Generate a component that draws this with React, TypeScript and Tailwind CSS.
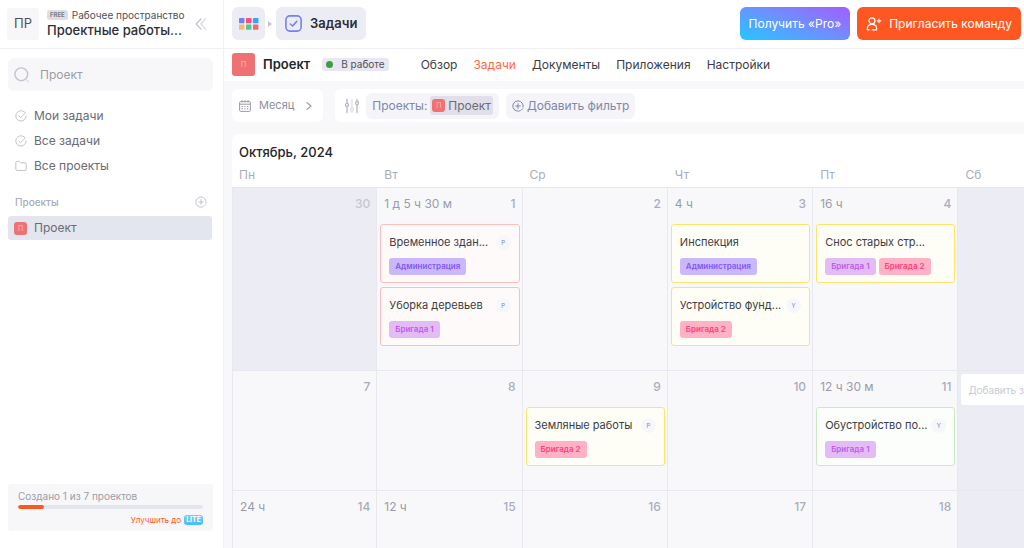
import React, { useState } from 'react';
import clsx from 'clsx';

type Tone = 'red' | 'yellow' | 'green';
type Team = 'Администрация' | 'Бригада 1' | 'Бригада 2';

interface Task {
  title: string;
  tone: Tone;
  teams: Team[];
  assignee?: string;
}

interface Day {
  date: number;
  hours?: string;
  tasks?: Task[];
  otherMonth?: boolean;
  adding?: boolean;
}

const weekDays = ['Пн', 'Вт', 'Ср', 'Чт', 'Пт', 'Сб', 'Вс'];

const weeks: Day[][] = [
  [
    { date: 30, otherMonth: true },
    {
      date: 1,
      hours: '1 д 5 ч 30 м',
      tasks: [
        { title: 'Временное здан...', tone: 'red', teams: ['Администрация'], assignee: 'P' },
        { title: 'Уборка деревьев', tone: 'red', teams: ['Бригада 1'], assignee: 'P' },
      ],
    },
    { date: 2 },
    {
      date: 3,
      hours: '4 ч',
      tasks: [
        { title: 'Инспекция', tone: 'yellow', teams: ['Администрация'] },
        { title: 'Устройство фунд...', tone: 'yellow', teams: ['Бригада 2'], assignee: 'Y' },
      ],
    },
    {
      date: 4,
      hours: '16 ч',
      tasks: [{ title: 'Снос старых стр...', tone: 'yellow', teams: ['Бригада 1', 'Бригада 2'] }],
    },
    { date: 5 },
    { date: 6 },
  ],
  [
    { date: 7 },
    { date: 8 },
    {
      date: 9,
      tasks: [{ title: 'Земляные работы', tone: 'yellow', teams: ['Бригада 2'], assignee: 'P' }],
    },
    { date: 10 },
    {
      date: 11,
      hours: '12 ч 30 м',
      tasks: [{ title: 'Обустройство по...', tone: 'green', teams: ['Бригада 1'], assignee: 'Y' }],
    },
    { date: 12, adding: true },
    { date: 13 },
  ],
  [
    { date: 14, hours: '24 ч' },
    { date: 15, hours: '12 ч' },
    { date: 16 },
    { date: 17 },
    { date: 18 },
    { date: 19 },
    { date: 20 },
  ],
];

const cardTones: Record<Tone, string> = {
  red: 'border-[#ffbdbd] bg-[#fffafa]',
  yellow: 'border-[#ffe46b] bg-[#fffef6]',
  green: 'border-[#cbe8c4] bg-[#fbfefb]',
};

const teamTones: Record<Team, string> = {
  'Администрация': 'bg-[#cab8fa] text-[#8257fb]',
  'Бригада 1': 'bg-[#e3bcf6] text-[#bf5bea]',
  'Бригада 2': 'bg-[#ffb1c6] text-[#ff417b]',
};

const CheckCircleIcon = () => (
  <svg className="size-3 shrink-0" viewBox="0 0 12 12" fill="none" stroke="#c3c4cd" strokeLinecap="round" strokeLinejoin="round">
    <path d="M9.6 2.1A5.2 5.2 0 1 0 11.2 6" />
    <path d="M4 6.2 5.5 7.6 10.4 2.9" />
  </svg>
);

const FolderIcon = () => (
  <svg className="size-3 shrink-0" viewBox="0 0 12 12" fill="none" stroke="#c3c4cd" strokeLinejoin="round">
    <path d="M.8 2.5c0-.7.5-1.2 1.2-1.2h2.3l1.5 1.6H10c.7 0 1.2.5 1.2 1.2v5.2c0 .7-.5 1.2-1.2 1.2H2c-.7 0-1.2-.5-1.2-1.2z" />
  </svg>
);

const PlusCircleIcon = ({ className }: { className: string }) => (
  <svg className={className} viewBox="0 0 12 12" fill="none" stroke="currentColor" strokeLinecap="round">
    <path d="M11.1 7.2A5.2 5.2 0 1 0 8.4 10.7" />
    <path d="M6 3.7v4.6M3.7 6h4.6" />
    <path d="M9.6 9.8 10.4 8.9" />
  </svg>
);

const SearchIcon = () => (
  <svg className="size-4 shrink-0" viewBox="0 0 16 16" fill="none" strokeLinecap="round">
    <circle cx="7.3" cy="7.3" r="6.4" stroke="#c3c4cd" strokeWidth="1.4" />
    <path d="M12.6 12.9 14.6 14.8" stroke="#dcdce4" strokeWidth="1.4" />
  </svg>
);

const CollapseIcon = () => (
  <svg className="h-3 w-3" viewBox="0 0 12 12" fill="none" strokeWidth="1.2" strokeLinecap="round" strokeLinejoin="round">
    <path d="M6 .8 1.2 6 6 11.2" stroke="#bfc0ca" />
    <path d="M10.6.8 5.8 6l4.8 5.2" stroke="#d9d9e2" />
  </svg>
);

const AppsIcon = () => (
  <svg className="h-3 w-5" viewBox="0 0 20 12">
    <rect x="0" y="0" width="5.4" height="5.2" rx=".6" fill="#6d83f7" />
    <rect x="7" y="0" width="5.4" height="5.2" rx=".6" fill="#fa4f7c" />
    <rect x="14" y="0" width="5.4" height="5.2" rx=".6" fill="#35a4ff" />
    <rect x="0" y="6.6" width="5.4" height="5.2" rx=".6" fill="#ffb56b" />
    <rect x="7" y="6.6" width="5.4" height="5.2" rx=".6" fill="#57c492" />
    <rect x="14" y="6.6" width="5.4" height="5.2" rx=".6" fill="#f2696c" />
  </svg>
);

const TasksIcon = () => (
  <svg className="size-[17px]" viewBox="0 0 17 17" fill="none" stroke="#7480f6" strokeWidth="1.6" strokeLinecap="round" strokeLinejoin="round">
    <rect x=".9" y=".9" width="15.2" height="15.2" rx="4" />
    <path d="m5.3 9 2.3 2 4.2-4.7" />
  </svg>
);

const InviteIcon = () => (
  <svg className="size-4" viewBox="0 0 16 16" fill="none" stroke="#fff" strokeWidth="1.2" strokeLinecap="round" strokeLinejoin="round">
    <circle cx="6" cy="4.8" r="3" />
    <path d="M3.2 13.8H1.4v-1.6c0-2.3 1.7-3.9 4.6-3.9s4.6 1.6 4.6 3.9v1.6H6.2" />
    <path d="M13 3v3.6M11.2 4.8h3.6" />
  </svg>
);

const CalendarIcon = () => (
  <svg className="size-3" viewBox="0 0 12 12" fill="none" stroke="#9b9ca8">
    <rect x=".6" y="1.6" width="10.8" height="9.8" rx="1.2" />
    <path d="M.6 4.2h10.8M3 .2v2.2M6 .2v2.2M9 .2v2.2" />
    <path d="M2.6 6.4h6.8M2.6 8.8h6.8" strokeDasharray="1.4 1.3" />
  </svg>
);

const SlidersIcon = () => (
  <svg className="h-4 w-[14px]" viewBox="0 0 14 16" fill="none" strokeWidth="1.2" strokeLinecap="round">
    <path d="M2 1.2v4M2 8.8v6" stroke="#b0b1bb" />
    <circle cx="2" cy="7" r="1.5" stroke="#b0b1bb" />
    <path d="M7 1.2v8.6M7 13.6v1.2" stroke="#dcdce4" />
    <circle cx="7" cy="11.7" r="1.5" stroke="#dcdce4" />
    <path d="M12 1.2v2.2M12 6.8v8" stroke="#b0b1bb" />
    <circle cx="12" cy="5" r="1.5" stroke="#b0b1bb" />
  </svg>
);

const ProjectBadge = ({ large }: { large?: boolean }) => (
  <span
    className={clsx(
      'flex shrink-0 items-center justify-center rounded-[3px] bg-[#f07174] text-[7px] leading-none text-[#f9b9ba]',
      large ? 'size-[23px]' : 'size-[13px]'
    )}
  >
    П
  </span>
);

const Sidebar = () => {
  const [query, setQuery] = useState('');

  return (
    <aside className="flex w-56 shrink-0 flex-col border-r border-[#f0f0f5] bg-white">
      <div className="flex h-[49px] items-center border-b border-[#f0f0f5] pr-4 pb-px pl-[7px]">
        <div className="flex size-8 items-center justify-center rounded-[3px] bg-[#f7f7fa] text-[13px] text-[#50515b]">ПР</div>
        <div className="ml-2 min-w-0 flex-1">
          <div className="flex items-center gap-1">
            <span className="rounded-[3px] bg-[#dedee0] px-[3px] text-[6px] leading-[10px] font-bold text-[#7c7d84]">FREE</span>
            <span className="text-[10px] leading-[14px] whitespace-nowrap text-[#50515b]">Рабочее пространство</span>
          </div>
          <div className="text-[13px] leading-[17px] font-medium whitespace-nowrap text-[#2c2d35]">Проектные работы...</div>
        </div>
        <button aria-label="Свернуть меню">
          <CollapseIcon />
        </button>
      </div>

      <label className="mt-[9px] mr-[10px] ml-2 flex h-[33px] items-center gap-[10px] rounded-md bg-[#f7f7fa] px-[6px]">
        <SearchIcon />
        <input
          aria-label="Поиск проекта"
          placeholder="Проект"
          value={query}
          onChange={(e) => setQuery(e.target.value)}
          className="min-w-0 flex-1 bg-transparent text-xs outline-none placeholder:text-[#9b9ca8]"
        />
      </label>

      <nav className="mt-3 flex flex-col px-[15px] text-xs leading-[25px] text-[#6a6b76]">
        <a href="#my-tasks" className="flex items-center gap-[7px]">
          <CheckCircleIcon />
          Мои задачи
        </a>
        <a href="#all-tasks" className="flex items-center gap-[7px]">
          <CheckCircleIcon />
          Все задачи
        </a>
        <a href="#all-projects" className="flex items-center gap-[7px]">
          <FolderIcon />
          Все проекты
        </a>
      </nav>

      <div className="mt-4 flex items-center justify-between pr-4 pl-[15px] text-[10px] leading-4 font-medium text-[#a9adbd]">
        Проекты
        <button aria-label="Добавить проект" className="text-[#c3c4cd]">
          <PlusCircleIcon className="size-3" />
        </button>
      </div>
      <a href="#project" className="mt-[6px] mr-[11px] ml-2 flex h-6 items-center gap-[7px] rounded-[3px] bg-[#e3e6ee] px-[6px] text-xs text-[#6a6b76]">
        <ProjectBadge />
        Проект
      </a>

      <div className="mt-auto mr-[10px] mb-[17px] ml-2 rounded-[3px] bg-[#f7f7fa] px-[10px] py-[5px]">
        <p className="text-[10px] leading-[14px] text-[#9b9ca8]">Создано 1 из 7 проектов</p>
        <div className="mt-[2px] h-1 overflow-hidden rounded-full bg-[#e3e6ee]">
          <div className="h-full w-1/7 rounded-full bg-[#ff5722]" />
        </div>
        <a href="#upgrade" className="mt-[5px] flex items-center justify-end gap-[3px] text-[8px] leading-3 text-[#ff5722]">
          Улучшить до
          <span className="rounded-[3px] bg-linear-to-b from-[#74cdfb] to-[#45bdf0] px-[2px] text-[7px] leading-[10px] font-bold text-white">LITE</span>
        </a>
      </div>
    </aside>
  );
};

const TopBar = () => (
  <header className="flex h-[49px] shrink-0 items-center border-b border-[#f0f0f5] bg-white pr-[3px] pb-px pl-2">
    <button aria-label="Приложения" className="flex h-[33px] w-[33px] items-center justify-center rounded-md bg-[#ececf5]">
      <AppsIcon />
    </button>
    <svg className="mr-1 ml-[3px] h-[6px] w-1 shrink-0" viewBox="0 0 4 6">
      <path d="M0 0 4 3 0 6z" fill="#c3c4cd" />
    </svg>
    <button className="flex h-[33px] items-center gap-2 rounded-md bg-[#ececf5] px-[9px] text-[13px] font-semibold text-[#2c2d35]">
      <TasksIcon />
      Задачи
    </button>
    <button className="ml-auto h-[33px] rounded-md bg-[linear-gradient(20deg,#22c8ff,#6b92ff_50%,#a45cff)] px-[9px] text-xs whitespace-nowrap text-white">
      Получить «Pro»
    </button>
    <button className="ml-[7px] flex h-[33px] items-center gap-[7px] rounded-md bg-[#ff5722] px-[9px] text-xs whitespace-nowrap text-white">
      <InviteIcon />
      Пригласить команду
    </button>
  </header>
);

const tabs = ['Обзор', 'Задачи', 'Документы', 'Приложения', 'Настройки'];

const ProjectBar = () => (
  <div className="flex h-8 shrink-0 items-center bg-white pb-px pl-2">
    <ProjectBadge large />
    <h1 className="ml-2 text-[13px] font-semibold text-[#23242a]">Проект</h1>
    <span className="ml-3 flex h-[13px] items-center gap-2 rounded-[3px] bg-[#e8e7f2] px-1 text-[10px] text-[#50515b]">
      <span className="size-[7px] rounded-full bg-[#3a9f3f]" />
      В работе
    </span>
    <nav className="ml-8 flex gap-4 text-xs text-[#3c3d46]">
      {tabs.map((tab) => (
        <a key={tab} href={`#${tab}`} className={clsx(tab === 'Задачи' && 'text-[#ff6b3d]')}>
          {tab}
        </a>
      ))}
    </nav>
  </div>
);

const Filters = () => (
  <div className="mt-2 flex shrink-0 gap-3 pl-2">
    <button className="flex h-[33px] items-center rounded-md bg-white px-[7px] text-[11px] text-[#8d8e9a]">
      <CalendarIcon />
      <span className="ml-2">Месяц</span>
      <svg className="mr-1 ml-3 h-2 w-[6px]" viewBox="0 0 6 8" fill="none" stroke="#9b9ca8" strokeWidth="1.2" strokeLinecap="round" strokeLinejoin="round">
        <path d="M1 .6 5 4 1 7.4" />
      </svg>
    </button>
    <div className="flex h-[33px] flex-1 items-center gap-[7px] rounded-l-md bg-white pl-[10px] text-xs text-[#7f87ab]">
      <SlidersIcon />
      <button className="flex h-[26px] items-center gap-[3px] rounded-md bg-[#f4f4f9] px-[6px]">
        Проекты:
        <span className="flex h-[19px] items-center gap-[3px] rounded-[3px] bg-[#e0dfea] px-[2px] text-[#6a6b76]">
          <ProjectBadge />
          Проект
        </span>
      </button>
      <button className="flex h-[26px] items-center gap-[3px] rounded-md bg-[#f4f4f9] px-[6px]">
        <PlusCircleIcon className="size-3" />
        Добавить фильтр
      </button>
    </div>
  </div>
);

const TaskCard = ({ task }: { task: Task }) => (
  <article className={clsx('rounded-[3px] border px-2 pt-[9px] pb-[7px]', cardTones[task.tone])}>
    <div className="flex h-4 items-center justify-between">
      <h3 className="text-[11px] whitespace-nowrap text-[#3c3d46]">{task.title}</h3>
      {task.assignee && (
        <span className="flex size-[15px] items-center justify-center rounded-full bg-[#f5f7fb] text-[6px] text-[#7f87ab]">{task.assignee}</span>
      )}
    </div>
    <div className="mt-2 flex gap-[3px]">
      {task.teams.map((team) => (
        <span key={team} className={clsx('rounded-[3px] px-[6px] text-[8px] leading-[17px] font-semibold whitespace-nowrap', teamTones[team])}>
          {team}
        </span>
      ))}
    </div>
  </article>
);

const DayCell = ({ day, weekend }: { day: Day; weekend: boolean }) => (
  <td
    className={clsx(
      'border-t border-r border-[#e8e8f1] p-0 align-top first:border-l',
      weekend || day.otherMonth ? 'bg-[#ececf5]' : 'bg-[#f8f8fa]'
    )}
  >
    {day.adding ? (
      <div className="p-[3px]">
        <input
          aria-label="Новая задача"
          placeholder="Добавить задачу"
          className="h-[31px] w-full rounded-[3px] bg-white px-[7px] text-[10px] outline-none placeholder:text-[#c9cad3]"
        />
      </div>
    ) : (
      <div className="pr-[2px] pb-6 pl-[3px]">
        <div className="flex justify-between px-1 pt-2 text-xs leading-4">
          <span className="text-[#9b9ca8]">{day.hours}</span>
          <span className={clsx('font-medium', day.otherMonth ? 'text-[#c6c7d0]' : 'text-[#a9adbd]')}>{day.date}</span>
        </div>
        <div className="mt-3 flex flex-col gap-1">
          {day.tasks?.map((task) => (
            <TaskCard key={task.title} task={task} />
          ))}
        </div>
      </div>
    )}
  </td>
);

const MonthCalendar = () => (
  <section className="mt-3 ml-2 flex-1 overflow-hidden rounded-tl-lg bg-white">
    <h2 className="px-[7px] pt-2 text-[13px] leading-5 font-medium text-[#23242a]">Октябрь, 2024</h2>
    <table className="w-full min-w-[1017px] table-fixed border-separate border-spacing-0">
      <thead>
        <tr className="h-[25px]">
          {weekDays.map((name) => (
            <th key={name} className="px-[7px] py-0 text-left text-xs leading-4 font-normal text-[#a9adbd]">
              {name}
            </th>
          ))}
        </tr>
      </thead>
      <tbody>
        {weeks.map((week) => (
          <tr key={week[0].date} className="h-[120px]">
            {week.map((day, index) => (
              <DayCell key={day.date} day={day} weekend={index > 4} />
            ))}
          </tr>
        ))}
      </tbody>
    </table>
  </section>
);

const App: React.FC = () => {
  return (
    <div className="flex h-screen overflow-hidden bg-white font-[Inter,'Liberation_Sans',sans-serif]">
      <Sidebar />
      <main className="flex min-w-0 flex-1 flex-col bg-[#f8f8fa]">
        <TopBar />
        <ProjectBar />
        <Filters />
        <MonthCalendar />
      </main>
    </div>
  );
};

export default App;
